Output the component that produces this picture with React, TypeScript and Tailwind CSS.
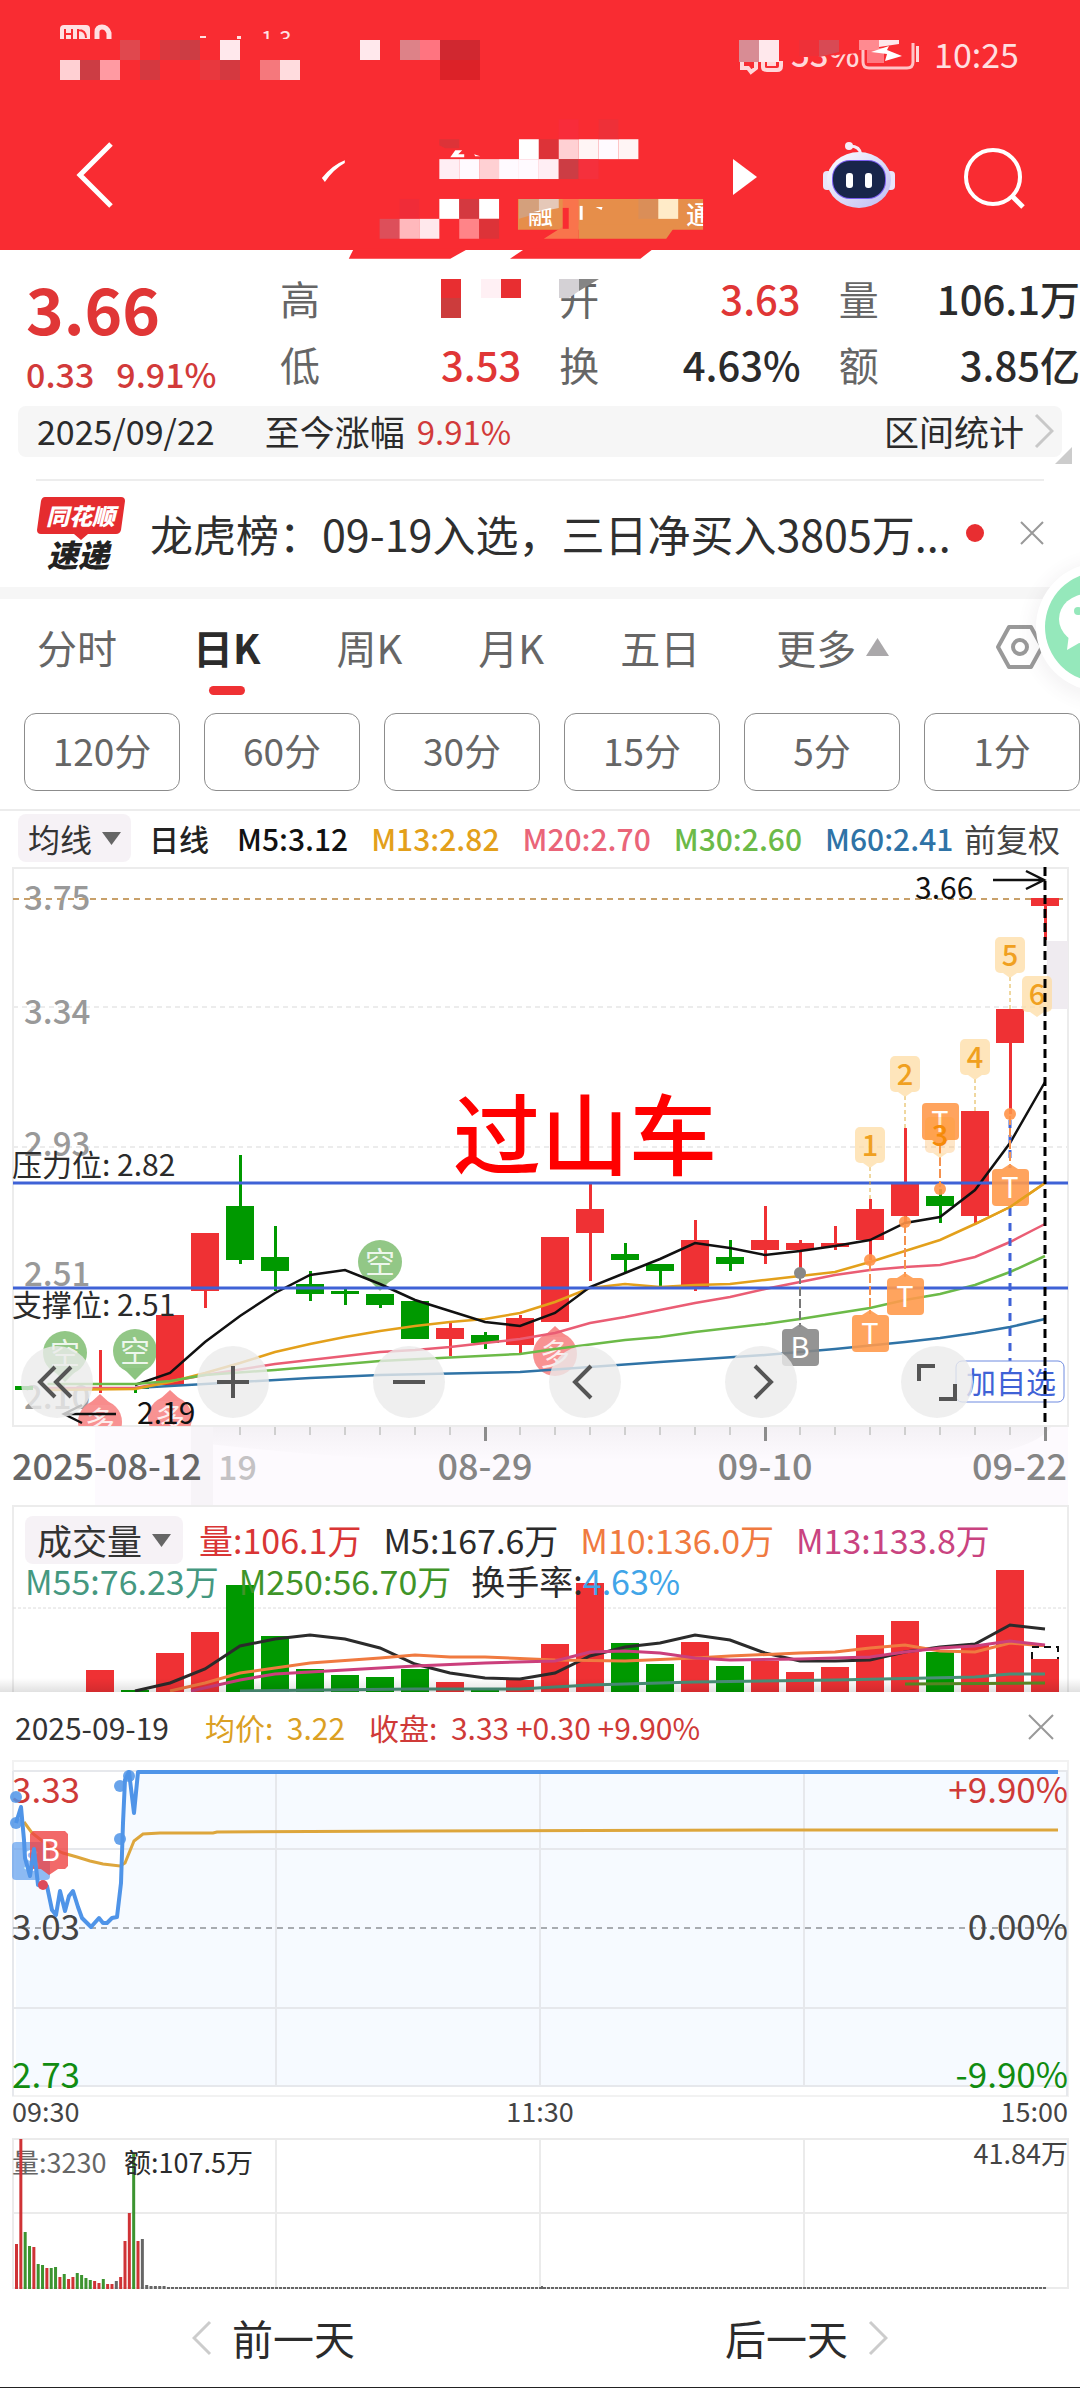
import React from "react";

type Candle = [k: number, open: number, close: number, high: number, low: number, up: boolean];
type Pt = [number, number];

const RED = "#ef3134";
const GREEN = "#009900";

const kx = (k: number) => 1045 - 35 * k;
const line = (pts: Pt[]) => pts.map(([k, y]) => `${kx(k)},${y}`).join(" ");
const raw = (pts: Pt[]) => pts.map(([x, y]) => `${x},${y}`).join(" ");

const candles: Candle[] = [
  [27, 1388, 1390, 1350, 1393, true],
  [26, 1387, 1389, 1387, 1393, false],
  [25, 1315, 1385, 1315, 1385, true],
  [24, 1233, 1291, 1233, 1308, true],
  [23, 1206, 1260, 1155, 1264, false],
  [22, 1257, 1271, 1226, 1291, false],
  [21, 1284, 1294, 1271, 1301, false],
  [20, 1291, 1294, 1289, 1305, false],
  [19, 1294, 1305, 1294, 1308, false],
  [18, 1301, 1339, 1301, 1339, false],
  [17, 1328, 1339, 1323, 1356, true],
  [16, 1335, 1343, 1332, 1349, false],
  [15, 1318, 1345, 1315, 1355, true],
  [14, 1237, 1322, 1237, 1322, true],
  [13, 1209, 1233, 1183, 1281, true],
  [12, 1254, 1260, 1243, 1273, false],
  [11, 1264, 1271, 1264, 1286, false],
  [10, 1240, 1288, 1220, 1291, true],
  [9, 1257, 1264, 1240, 1271, false],
  [8, 1240, 1250, 1206, 1264, true],
  [7, 1243, 1250, 1240, 1273, true],
  [6, 1243, 1247, 1226, 1250, true],
  [5, 1209, 1240, 1199, 1260, true],
  [4, 1183, 1216, 1128, 1223, true],
  [3, 1196, 1206, 1189, 1223, false],
  [2, 1111, 1216, 1111, 1223, true],
  [1, 1009, 1043, 1009, 1114, true],
  [0, 898, 906, 898, 940, true],
];

const priceLines: { color: string; pts: Pt[] }[] = [
  { color: "#2f73a6", pts: [[28.5, 1389], [26, 1388], [24, 1384], [21, 1378], [19, 1375], [15, 1372], [13, 1367], [11, 1362], [8, 1355], [6, 1349], [4, 1342], [3, 1338], [2, 1333], [1, 1327], [0, 1319]] },
  { color: "#ea5d74", pts: [[28.5, 1388], [26, 1388], [24, 1375], [22, 1364], [19, 1352], [18, 1350], [17, 1347], [16, 1343], [15, 1339], [14, 1333], [13, 1323], [12, 1317], [11, 1310], [10, 1303], [9, 1297], [8, 1289], [7, 1282], [6, 1275], [5, 1270], [4, 1267], [3, 1265], [2, 1257], [1, 1242], [0, 1224]] },
  { color: "#e3a01b", pts: [[28.5, 1390], [26, 1389], [25, 1382], [24, 1373], [23, 1363], [22, 1352], [21, 1344], [20, 1337], [19, 1331], [18, 1326], [17, 1322], [16, 1319], [15, 1313], [14, 1302], [13, 1288], [12, 1284], [11, 1287], [10, 1285], [9, 1284], [8, 1280], [7, 1276], [6, 1272], [5, 1262], [4, 1251], [3, 1240], [2, 1224], [1, 1207], [0, 1183]] },
  { color: "#111111", pts: [[26, 1385], [25, 1373], [24, 1342], [23, 1316], [22, 1293], [21, 1275], [20, 1270], [19, 1284], [18, 1300], [17, 1311], [16, 1322], [15, 1326], [14, 1313], [13, 1287], [12, 1273], [11, 1259], [10, 1243], [9, 1248], [8, 1255], [7, 1251], [6, 1246], [5, 1240], [4, 1223], [3, 1217], [2, 1190], [1, 1143], [0, 1082]] },
  { color: "#6cba48", pts: [[28.5, 1384], [26, 1384], [25, 1381], [24, 1375], [22, 1370], [19, 1361], [15, 1354], [14, 1349], [12, 1340], [11, 1337], [10, 1332], [8, 1324], [7, 1319], [5, 1308], [4, 1300], [3, 1294], [2, 1285], [1, 1272], [0, 1256]] },
];

const volumes: [number, number, boolean][] = [
  [27, 1670, true], [26, 1690, false], [25, 1653, true], [24, 1632, true], [23, 1585, false], [22, 1636, false],
  [21, 1669, false], [20, 1675, false], [19, 1677, false], [18, 1669, false], [17, 1682, true], [16, 1690, false],
  [15, 1680, true], [14, 1644, true], [13, 1583, true], [12, 1643, false], [11, 1664, false], [10, 1642, true],
  [9, 1666, false], [8, 1661, true], [7, 1672, true], [6, 1667, true], [5, 1635, true], [4, 1621, true],
  [3, 1652, false], [2, 1645, true], [1, 1570, true], [0, 1659, true],
];

const volumeLines: { color: string; pts: Pt[] }[] = [
  { color: "#2b2b2b", pts: [[26, 1691], [25, 1683], [24, 1669], [23, 1646], [22, 1639], [21, 1635], [20, 1639], [19, 1648], [18, 1664], [17, 1673], [16, 1678], [15, 1679], [14, 1673], [13, 1656], [12, 1647], [11, 1643], [10, 1635], [9, 1640], [8, 1653], [7, 1661], [6, 1661], [5, 1660], [4, 1652], [3, 1647], [2, 1644], [1, 1625], [0, 1629]] },
  { color: "#f07a40", pts: [[25, 1691], [24, 1683], [23, 1673], [21, 1663], [19, 1658], [18, 1655], [17, 1657], [16, 1657], [14, 1660], [12, 1661], [10, 1658], [9, 1656], [7, 1653], [6, 1652], [5, 1648], [4, 1645], [3, 1651], [2, 1652], [1, 1643], [0, 1646]] },
  { color: "#cb3f7c", pts: [[24.4, 1691], [23, 1680], [22, 1674], [20, 1670], [18, 1666], [16, 1663], [14, 1661], [13, 1652], [12, 1651], [11, 1653], [10, 1658], [9, 1660], [7, 1659], [5, 1657], [4, 1652], [3, 1648], [2, 1646], [1, 1641], [0, 1645]] },
  { color: "#4a8f78", pts: [[23, 1691], [18, 1689], [15, 1689], [13, 1685], [10, 1682], [6, 1680], [2, 1677], [1, 1674], [0, 1674]] },
  { color: "#5a8a25", pts: [[4, 1684], [0, 1683]] },
];

const intraday: Pt[] = [
  [16, 1823], [21, 1807], [24, 1840], [25, 1858], [30, 1876], [34, 1849], [38, 1885], [43, 1887], [47, 1886], [52, 1910],
  [56, 1915], [60, 1891], [65, 1911], [69, 1896], [73, 1891], [78, 1907], [82, 1918], [91, 1927], [99, 1918], [103, 1923],
  [107, 1923], [112, 1918], [117, 1917], [121, 1883], [123, 1823], [125, 1780], [129, 1772], [134, 1813], [138, 1772], [1058, 1772],
];
const average: Pt[] = [
  [24, 1822], [32, 1833], [50, 1847], [63, 1853], [77, 1857], [90, 1861], [103, 1864], [120, 1866], [125, 1863], [134, 1841],
  [143, 1834], [160, 1833], [213, 1833], [217, 1832], [423, 1831], [809, 1830], [1058, 1830],
];

const minuteBars: [string, number][] = [
  ["r", 45], ["r", 150], ["g", 57], ["g", 43], ["r", 42], ["g", 25], ["g", 24], ["r", 21], ["g", 21], ["g", 22], ["r", 12],
  ["g", 15], ["r", 10], ["r", 12], ["g", 16], ["g", 14], ["g", 11], ["g", 9], ["r", 8], ["r", 6], ["g", 10], ["r", 5], ["r", 5],
  ["k", 8], ["r", 12], ["r", 48], ["r", 76], ["g", 135], ["r", 48], ["k", 50], ["k", 4], ["k", 3], ["k", 3], ["k", 3], ["k", 3],
];
const barColor: Record<string, string> = { r: "#cf3336", g: "#3c9430", k: "#666666" };

const headerCells: [number, number, string][] = [
  [220, 29, "#ffffff"], [240, 29, "#dd3338"], [260, 29, "#ffd0d3"], [280, 29, "#fff5f5"], [300, 29, "#fffaff"], [320, 29, "#fff5f5"],
  [260, 9, "#f82c3a"], [300, 9, "#ee3038"],
  [140, 49, "#ffeef4"], [160, 49, "#fffaff"], [180, 49, "#ffd0d3"], [200, 49, "#fffaff"], [220, 49, "#fffaff"], [240, 49, "#ffeef4"],
  [260, 49, "#cc3d44"], [280, 49, "#f5303c"], [100, 89, "#f02c38"], [140, 89, "#ffffff"], [160, 89, "#d43940"], [180, 89, "#ffffff"],
  [80, 109, "#dd4f5a"], [100, 109, "#ffb8bc"], [120, 109, "#ffe8ec"], [160, 109, "#ff8488"], [180, 109, "#dd3338"],
];

const statusCells: [number, number, string][] = [
  [120, 40, "#e0484e"], [160, 40, "#d8393f"], [180, 40, "#cc3d44"], [220, 40, "#ffe8ec"], [360, 40, "#ffe8ec"], [400, 40, "#dd8288"],
  [420, 40, "#ff7480"], [440, 40, "#d02830"], [460, 40, "#d02830"], [60, 60, "#ffd0d3"], [80, 60, "#cc3d44"], [100, 60, "#ff9aa2"],
  [140, 60, "#d43940"], [200, 60, "#e8383e"], [220, 60, "#d43940"], [260, 60, "#f5787c"], [280, 60, "#ffdcde"], [440, 60, "#dc2228"], [460, 60, "#dc2228"],
];

function StatusBar() {
  return (
    <div className="flex h-[105px] items-start justify-between pr-[61px]">
      <svg className="h-[90px] w-[480px]" viewBox="0 0 480 90" aria-hidden="true">
        <defs>
          <clipPath id="left-mask"><rect x="0" y="20" width="480" height="19" /></clipPath>
        </defs>
        <g clipPath="url(#left-mask)" fill="#ffe0e2">
          <rect x="60" y="25" width="30" height="24" rx="4" />
          <path d="M65 29v12M65 34h7M72 29v12M78 29v12M78 30q8 0 8 8" stroke="#f92c32" strokeWidth="2" fill="none" />
          <path d="M97 42V32q0-5 5-5t7 6v9" stroke="#ffe0e2" strokeWidth="5" fill="none" />
          <text x="261" y="47" fontSize="22">1.3</text>
          <rect x="200" y="36" width="6" height="2" />
          <rect x="237" y="36" width="4" height="3" />
        </g>
        {statusCells.map(([x, y, c]) => (
          <rect key={`${x}-${y}`} x={x} y={y} width="20" height="20" fill={c} />
        ))}
      </svg>
      <div className="flex items-start gap-[15px]">
        <svg className="h-[90px] w-[185px]" viewBox="735 0 185 90" aria-hidden="true">
          <defs>
            <clipPath id="right-mask"><path d="M735 57h80l45-4v-6h60v45H735z" /></clipPath>
          </defs>
          <g clipPath="url(#right-mask)">
            <text x="792" y="67" fontSize="33" fontWeight="500" fill="#ffd8da">53%</text>
          </g>
          <path d="M743 60v8h6l3 4 5-4v-6M764 62v5q0 3 4 3h10q4 0 4-4v-5M768 64h9" fill="none" stroke="#ffd8da" strokeWidth="4" />
          <rect x="740" y="40" width="20" height="22" fill="#d88c94" />
          <rect x="760" y="40" width="20" height="22" fill="#ffe8ec" />
          <rect x="800" y="40" width="20" height="16" fill="#ee3038" />
          <path d="M820 40h20v12l-20 5z" fill="#d84a54" />
          <path d="M864 46v16q0 6 6 6h38q6 0 6-6V43" fill="none" stroke="#ffc4c7" strokeWidth="3" />
          <rect x="868" y="48" width="17" height="15" fill="#ff7880" />
          <rect x="860" y="40" width="20" height="10" fill="#ff8a90" />
          <path d="M880 40h20v4l-20 3z" fill="#ffe8ec" />
          <path d="M872 52l18-6-2 4 15 6-17 5 2-7z" fill="#fff" />
          <rect x="917" y="46" width="3" height="16" fill="#ffd8da" />
        </svg>
        <span className="pt-[36px] text-[34px] leading-9 text-[#ffdfe0]">10:25</span>
      </div>
    </div>
  );
}

function TitleBar() {
  return (
    <div className="flex h-[145px] items-start justify-between pr-[54px] pl-[74px]">
      <button aria-label="返回" className="mt-[36px]">
        <svg className="h-[68px] w-[42px]" viewBox="0 0 42 68" fill="none" stroke="#fff" strokeWidth="5">
          <path d="M37 3L6 34l31 31" />
        </svg>
      </button>
      <svg className="relative z-10 mt-[5px] ml-[184px] h-[155px] w-[420px]" viewBox="0 0 420 155" aria-hidden="true">
        <path d="M54 139h115l-18 10H49zM226 139h129l-13 10H211z" fill="#f92c32" />
        <path d="M22 68Q32 55 45 50v3Q34 59 25 72z" fill="#fff" />
        <path d="M140 29h20v9h-14l-6-3z" fill="#dd3338" />
        <path d="M151 47l5-7h7l-4 4h6v3zM175 44l6 2h-5z" fill="#fff" />
        <path d="M219 89h186v31H219z" fill="#e68e4a" />
        <path d="M264 89h16v40h-35l19-12z" fill="#f9744c" />
        <path d="M280 115h98l-10 14h-88z" fill="#e68e4a" />
        <path d="M220 89h20v14l-20 6z" fill="#d4a07c" />
        <path d="M240 89h20v9l-20 4z" fill="#e5c8b8" />
        <rect x="264" y="98" width="6" height="21" fill="#f92c32" />
        <rect x="340" y="89" width="20" height="20" fill="#da8e58" />
        <rect x="360" y="89" width="20" height="20" fill="#ffebc8" />
        <rect x="281" y="96" width="3" height="14" fill="#fff" />
        <path d="M297 97h7l-1 3z" fill="#fff" />
        <defs>
          <clipPath id="tag-mask"><rect x="219" y="89" width="186" height="31" /></clipPath>
          <clipPath id="tag-mask-low"><path d="M219 106l41-10v30h-41z" /></clipPath>
        </defs>
        <text x="229" y="114" fontSize="25" fontWeight="500" fill="#fff" clipPath="url(#tag-mask-low)">融</text>
        <text x="388" y="114" fontSize="25" fontWeight="500" fill="#fff" clipPath="url(#tag-mask)">通</text>
        {headerCells.map(([x, y, c]) => (
          <rect key={`${x}-${y}`} x={x} y={y} width="20" height="20" fill={c} />
        ))}
      </svg>
      <button aria-label="下一只" className="mt-[54px] ml-[15px]">
        <svg className="h-[36px] w-[24px]" viewBox="0 0 24 36"><path d="M0 0l24 18L0 36z" fill="#fff" /></svg>
      </button>
      <button aria-label="智能助手" className="mt-[35px] ml-[66px]">
        <svg className="h-[70px] w-[72px]" viewBox="0 0 72 70">
          <defs>
            <linearGradient id="robot" x1="0" y1="0" x2="1" y2="1">
              <stop offset="0" stopColor="#fff" /><stop offset="1" stopColor="#bdbbf2" />
            </linearGradient>
          </defs>
          <circle cx="26" cy="6" r="4" fill="#f6eef8" />
          <path d="M27 6q10 0 11 9" fill="none" stroke="#f6eef8" strokeWidth="3" />
          <rect x="0" y="31" width="9" height="19" rx="4" fill="#e9e6fb" />
          <rect x="63" y="31" width="9" height="19" rx="4" fill="#e9e6fb" />
          <ellipse cx="36" cy="40" rx="32" ry="28" fill="url(#robot)" />
          <rect x="9" y="20" width="54" height="39" rx="18" fill="#7a5cf0" />
          <rect x="10" y="21" width="52" height="37" rx="17" fill="#18254a" />
          <rect x="23" y="33" width="7" height="15" rx="3" fill="#fff" />
          <rect x="42" y="33" width="7" height="15" rx="3" fill="#fff" />
        </svg>
      </button>
      <button aria-label="搜索" className="mt-[42px] ml-[69px]">
        <svg className="h-[62px] w-[62px]" viewBox="0 0 62 62" fill="none" stroke="#fff" strokeWidth="4">
          <circle cx="29" cy="30" r="27" /><path d="M48 49l11 11" strokeWidth="5" />
        </svg>
      </button>
    </div>
  );
}

function Stats() {
  const red = "text-[#e03636]";
  const dark = "text-[#2b2b2b]";
  const cols: [string, string, string, string, string, string][] = [
    ["高", "", red, "低", "3.53", red],
    ["开", "3.63", red, "换", "4.63%", dark],
    ["量", "106.1万", dark, "额", "3.85亿", dark],
  ];
  return (
    <section className="flex h-[156px] pt-[15px] pl-[26px]">
      <div className="w-[254px] text-[#e03636]">
        <div className="pt-[6px] text-[64px] leading-[72px] font-bold">3.66</div>
        <div className="mt-[9px] flex gap-[22px] text-[34px] leading-[44px] font-medium text-[#d23a3a]"><span>0.33</span><span>9.91%</span></div>
      </div>
      <div className="flex flex-1 gap-[38px]">
        {cols.map(([a, av, ac, b, bv, bc], i) => (
          <dl key={a} className="relative flex flex-1 flex-col text-[40px] leading-[66px]">
            <div className="flex justify-between whitespace-nowrap"><dt className="text-[#666]">{a}</dt><dd className={`font-medium ${ac}`}>{av}</dd></div>
            <div className="flex justify-between whitespace-nowrap"><dt className="text-[#666]">{b}</dt><dd className={`font-medium ${bc}`}>{bv}</dd></div>
            {i === 0 && (
              <svg className="absolute top-[14px] right-0 h-[39px] w-[80px]" viewBox="0 0 80 39" aria-hidden="true">
                <path d="M0 0h20v19H0zM60 0h20v19H60z" fill="#e82e31" />
                <path d="M0 19h20v20H0z" fill="#cc3c3c" />
                <path d="M40 0h20v19H40z" fill="#fff0f4" />
              </svg>
            )}
            {i === 1 && (
              <svg className="absolute top-[14px] left-0 h-[19px] w-[40px]" viewBox="0 0 40 19" aria-hidden="true">
                <path d="M0 0h20v12L10 19H0z" fill="#d4d1d5" />
                <path d="M20 0h20L20 12z" fill="#858585" />
              </svg>
            )}
          </dl>
        ))}
      </div>
    </section>
  );
}

function DateBar() {
  return (
    <section className="relative mx-[18px] flex h-[51px] items-center rounded-lg bg-[#f6f6f6] pr-[8px] pb-[2px] pl-[19px] text-[35px] leading-[48px] text-[#2b2b2b]">
      <span className="text-[34px]">2025/09/22</span>
      <span className="ml-[50px]">至今涨幅</span>
      <span className="ml-3 text-[33px] text-[#d23a3a]">9.91%</span>
      <button className="ml-auto flex items-center gap-[10px]">
        区间统计
        <svg className="h-[36px] w-[20px]" viewBox="0 0 20 36" fill="none" stroke="#c8c8c8" strokeWidth="3"><path d="M2 2l16 16L2 34" /></svg>
      </button>
      <svg className="absolute -right-[10px] -bottom-[7px] h-[17px] w-[17px]" viewBox="0 0 17 17"><path d="M17 0v17H0z" fill="#ccc" /></svg>
    </section>
  );
}

function NewsRow() {
  return (
    <section className="mt-[22px] border-b-[12px] border-[#f6f6f6]">
      <div className="mx-[36px] flex h-[108px] items-center border-t-2 border-[#ededed] pb-[2px]">
        <svg className="h-[76px] w-[90px] shrink-0" viewBox="36 495 90 76" role="img" aria-label="同花顺速递">
          <path d="M45 497h76q4 0 4 4l-4 29q-1 4-5 4H88l-7 6-7-6H41q-4 0-4-4l4-29q1-4 4-4z" fill="#e52c2f" />
          <text x="46" y="525" fontSize="23" fontWeight="900" fontStyle="italic" fill="#fff">同花顺</text>
          <text x="47" y="567" fontSize="31" fontWeight="900" fontStyle="italic" fill="#222">速递</text>
        </svg>
        <a href="#news" className="ml-[24px] min-w-0 flex-1 truncate text-[43px] leading-[60px] text-[#2f2f2f]">龙虎榜：09-19入选，三日净买入3805万...</a>
        <span className="ml-[12px] h-[18px] w-[18px] rounded-full bg-[#e82e31]" />
        <button aria-label="关闭" className="ml-[36px]">
          <svg className="h-[24px] w-[24px]" viewBox="0 0 24 24" stroke="#999" strokeWidth="2"><path d="M1 1l22 22M23 1L1 23" /></svg>
        </button>
      </div>
    </section>
  );
}

function PeriodTabs() {
  const tabs = ["分时", "日K", "周K", "月K", "五日", "更多"];
  const minutes = ["120分", "60分", "30分", "15分", "5分", "1分"];
  return (
    <section className="border-b-2 border-[#ececec] pb-[18px]">
      <nav className="flex h-[114px] items-start gap-[76px] pt-[18px] pl-[37px] text-[40px] leading-[60px] text-[#666]">
        {tabs.map((t) => (
          <button
            key={t}
            className={
              t === "日K"
                ? "flex flex-col items-center font-bold text-[#2b2b2b] after:mt-[9px] after:h-[9px] after:w-[36px] after:rounded-full after:bg-[#ef3134]"
                : "flex items-center"
            }
          >
            {t}
            {t === "更多" && (
              <svg className="-mr-[33px] ml-[10px] h-[18px] w-[23px]" viewBox="0 0 23 18"><path d="M11.5 0L23 18H0z" fill="#aaa8aa" /></svg>
            )}
          </button>
        ))}
        <button aria-label="设置" className="mt-[6px] mr-[35px] ml-auto">
          <svg className="h-[48px] w-[50px]" viewBox="0 0 50 48" fill="none" stroke="#999" strokeWidth="4">
            <path d="M14 4h22l11 20-11 20H14L3 24z" strokeLinejoin="round" /><circle cx="25" cy="24" r="7" />
          </svg>
        </button>
      </nav>
      <div className="grid grid-cols-6 gap-[24px] pl-[24px]">
        {minutes.map((m) => (
          <button key={m} className="h-[78px] rounded-xl border border-[#8c8c8c] pb-[3px] text-[37px] text-[#666]">{m}</button>
        ))}
      </div>
    </section>
  );
}

function Caret() {
  return <svg className="h-[13px] w-[19px]" viewBox="0 0 19 13" aria-hidden="true"><path d="M0 0h19L9.5 13z" fill="#666" /></svg>;
}

function AverageRow() {
  return (
    <div className="flex h-[54px] items-center pr-[20px] pl-[18px] text-[30px] leading-[44px] font-medium whitespace-nowrap">
      <button className="flex h-[48px] items-center gap-[10px] rounded-lg bg-[#f6f2f6] px-[10px] text-[32px] font-normal text-[#333]">均线<Caret /></button>
      <span className="ml-[18px] text-[#222]">日线</span>
      <span className="ml-[28px] text-[#111]">M5:3.12</span>
      <span className="ml-[23px] text-[#e3a01b]">M13:2.82</span>
      <span className="ml-[23px] text-[#ea6579]">M20:2.70</span>
      <span className="ml-[23px] text-[#6cba48]">M30:2.60</span>
      <span className="ml-[23px] text-[#2f73a6]">M60:2.41</span>
      <button className="ml-auto text-[32px] font-normal text-[#444]">前复权</button>
    </div>
  );
}

function Tag({ x, y, label, color, tail = "up" }: { x: number; y: number; label: string; color: string; tail?: "up" | "down" }) {
  const points = tail === "up" ? `${x - 8},${y} ${x},${y - 5} ${x + 8},${y}` : `${x - 8},${y + 37} ${x},${y + 42} ${x + 8},${y + 37}`;
  return (
    <g>
      <rect x={x - 18} y={y} width="37" height="37" rx="4" fill={color} fillOpacity="0.9" />
      <polygon points={points} fill={color} fillOpacity="0.9" />
      <text x={x} y={y + 29} fontSize="29" fill="#fff" textAnchor="middle">{label}</text>
    </g>
  );
}

function DayBadge({ x, y, label, stem = 0, faint = false }: { x: number; y: number; label: string; stem?: number; faint?: boolean }) {
  const alpha = faint ? 0.25 : 0.75;
  return (
    <g>
      {stem > 0 && <path d={`M${x} ${y + 40}v${stem}`} stroke="#e0b040" strokeWidth="1" strokeDasharray="4 3" />}
      <rect x={x - 15} y={y} width="30" height="36" rx="5" fill={faint ? "#ff9a20" : "#fddca4"} fillOpacity={alpha} />
      <polygon points={`${x - 7},${y + 36} ${x},${y + 41} ${x + 7},${y + 36}`} fill="#fddca4" fillOpacity="0.75" />
      <text x={x} y={y + 29} fontSize="29" fontWeight="500" fill={faint ? "#f58a08" : "#f0a020"} textAnchor="middle">{label}</text>
    </g>
  );
}

function Pin({ x, y, label, down }: { x: number; y: number; label: string; down: boolean }) {
  const c = down ? "#8cc480" : "#f88c8c";
  return (
    <g>
      <circle cx={x} cy={y} r="22" fill={c} fillOpacity="0.95" />
      <polygon points={down ? `${x - 12},${y + 17} ${x},${y + 29} ${x + 12},${y + 17}` : `${x - 12},${y - 17} ${x},${y - 28} ${x + 12},${y - 17}`} fill={c} />
      <text x={x} y={y + 11} fontSize="30" fill="#fff" fillOpacity="0.85" textAnchor="middle">{label}</text>
    </g>
  );
}

function PriceChart() {
  const labels: [string, number][] = [["3.75", 910], ["3.34", 1024], ["2.93", 1156], ["2.51", 1286], ["2.10", 1409]];
  const tools: [string, React.ReactNode][] = [
    ["最早", <path key="a" d="M34 21L19 36l15 15M50 21L35 36l15 15" />],
    ["放大", <path key="b" d="M20 36h32M36 20v32" />],
    ["缩小", <path key="c" d="M20 36h32" />],
    ["左移", <path key="d" d="M42 20L26 36l16 16" />],
    ["右移", <path key="e" d="M30 20l16 16-16 16" />],
    ["全屏", <path key="f" d="M18 35V20h16M54 38v15H38" />],
  ];
  return (
    <section className="relative">
      <svg className="block w-full" viewBox="0 865 1080 640" role="img" aria-label="日K线图">
        <defs>
          <clipPath id="plot"><rect x="13" y="866" width="1055" height="560" /></clipPath>
          <linearGradient id="axis-shade" x1="0" y1="0" x2="0" y2="1">
            <stop offset="0" stopColor="#f4f1f5" /><stop offset="1" stopColor="#fdfafe" />
          </linearGradient>
        </defs>
        <rect x="95" y="1427" width="973" height="78" fill="#fdfafe" />
        <path d="M191 1427h860q-20 28-120 33H420q-90-2-229-18z" fill="url(#axis-shade)" />
        <rect x="191" y="1427" width="22" height="78" fill="#f7f4f8" />
        <rect x="13" y="868" width="1055" height="558" fill="none" stroke="#ececec" strokeWidth="2" />
        <path d="M13 1007h1055M13 1147h1055" stroke="#ececec" strokeWidth="2" strokeDasharray="5 4" />
        {labels.map(([t, y]) => (
          <text key={t} x="24" y={y} fontSize="33" fontWeight="500" fill="#999">{t}</text>
        ))}
        <path d="M13 899h1050" stroke="#c8a06a" strokeWidth="2" strokeDasharray="6 5" />
        <rect x="1047" y="941" width="21" height="68" fill="#efebf0" />
        <g clipPath="url(#plot)">
          <rect x="15" y="1386" width="18" height="4" fill={GREEN} />
          <Pin x={65} y={1353} label="空" down />
          <Pin x={135} y={1351} label="空" down />
          <Pin x={380} y={1262} label="空" down />
          <Pin x={100} y={1422} label="多" down={false} />
          <Pin x={170} y={1418} label="多" down={false} />
          <Pin x={555} y={1354} label="多" down={false} />
          {candles.map(([k, a, b, h, l, up]) => (
            <g key={k} fill={up ? RED : GREEN}>
              <rect x={kx(k) - 14} y={a} width="28" height={b - a} />
              <rect x={kx(k) - 1} y={h} width="3" height={l - h} />
            </g>
          ))}
          {priceLines.map((l) => (
            <polyline key={l.color} points={line(l.pts)} fill="none" stroke={l.color} strokeWidth="2.5" />
          ))}
        </g>
        <path d="M13 1183h1055M13 1288h1055" stroke="#3f62d6" strokeWidth="3" />
        <text x="12" y="1176" fontSize="30" fill="#2b2b2b">压力位: 2.82</text>
        <text x="12" y="1316" fontSize="30" fill="#2b2b2b">支撑位: 2.51</text>
        <text x="585" y="1168" fontSize="88" fontWeight="500" fill="#ff0000" textAnchor="middle">过山车</text>

        <path d="M1010 1120v48M1010 1208v156" stroke="#3f62d6" strokeWidth="3" strokeDasharray="8 7" />
        <path d="M870 1262v52M905 1224v53M940 1145v42M1010 1116v50" stroke="#f4914e" strokeWidth="2" strokeDasharray="9 3" />
        <path d="M800 1275v52" stroke="#777" strokeWidth="2" strokeDasharray="9 3" />
        {([[870, 1260], [905, 1222], [940, 1189], [1010, 1114]] as Pt[]).map(([x, y]) => (
          <circle key={x} cx={x} cy={y} r="6" fill="#ff9448" fillOpacity="0.9" />
        ))}
        <circle cx="800" cy="1273" r="6" fill="#888" />
        <DayBadge x={870} y={1127} label="1" stem={32} />
        <DayBadge x={905} y={1056} label="2" stem={32} />
        <Tag x={940} y={1103} label="T" color="#ff9a4d" tail="down" />
        <DayBadge x={940} y={1117} label="3" faint />
        <DayBadge x={975} y={1039} label="4" stem={32} />
        <DayBadge x={1010} y={937} label="5" stem={32} />
        <DayBadge x={1037} y={976} label="6" />
        <Tag x={870} y={1315} label="T" color="#ff9a4d" />
        <Tag x={905} y={1278} label="T" color="#ff9a4d" />
        <Tag x={1010} y={1169} label="T" color="#ff9a4d" />
        <Tag x={800} y={1329} label="B" color="#888888" />
        <polyline points="975,1224 1010,1207 1045,1183" fill="none" stroke="#e3a01b" strokeWidth="2.5" />

        <text x="915" y="899" fontSize="30" fill="#111">3.66</text>
        <path d="M993 880h50M1026 871l18 9-18 9" fill="none" stroke="#111" strokeWidth="2.5" />
        <text x="137" y="1424" fontSize="30" fill="#111">2.19</text>
        <path d="M116 1414H66M82 1423l-18-9 18-9" fill="none" stroke="#111" strokeWidth="2.5" />

        <rect x="956" y="1361" width="108" height="41" rx="6" fill="#fff" stroke="#6f8be0" strokeWidth="1" />
        <text x="966" y="1393" fontSize="30" fill="#3f62d6">加自选</text>
        <path d="M1045 867v558" stroke="#000" strokeWidth="3" strokeDasharray="9 5" />

        {Array.from({ length: 24 }, (_, k) => (
          <rect key={k} x={kx(k) - 1} y="1427" width={k % 8 === 0 ? 3 : 2} height={k % 8 === 0 ? 14 : 8} fill={k % 8 === 0 ? "#8c8c8c" : "#cfcfcf"} />
        ))}
        <g fontSize="36" fontWeight="500" fill="#858585">
          <text x="12" y="1480" fill="#666">2025-08-12</text>
          <text x="218" y="1480" fontSize="34" fill="#c4c2c4">19</text>
          <text x="485" y="1480" textAnchor="middle">08-29</text>
          <text x="765" y="1480" textAnchor="middle">09-10</text>
          <text x="1067" y="1480" textAnchor="end">09-22</text>
        </g>
      </svg>
      <div className="absolute inset-x-0 top-[481px] flex justify-start gap-[104px] pl-[21px]">
        {tools.map(([name, icon]) => (
          <button key={name} aria-label={name} className="h-[72px] w-[72px] shrink-0 rounded-full bg-[#ebebeb]/80">
            <svg viewBox="0 0 72 72" fill="none" stroke="#555" strokeWidth="4">{icon}</svg>
          </button>
        ))}
      </div>
    </section>
  );
}

function VolumeChart() {
  return (
    <section className="relative">
      <svg className="block w-full" viewBox="0 1505 1080 187" role="img" aria-label="成交量图">
        <defs>
          <linearGradient id="sheet-shadow" x1="0" y1="0" x2="0" y2="1">
            <stop offset="0" stopColor="#000" stopOpacity="0" /><stop offset="1" stopColor="#000" stopOpacity="0.12" />
          </linearGradient>
        </defs>
        <path d="M13 1692V1506h1055v186" fill="none" stroke="#ececec" strokeWidth="2" />
        <path d="M13 1608h1055" stroke="#dcdcdc" strokeWidth="1" strokeDasharray="3 2" />
        {volumes.map(([k, y, up]) => (
          <rect key={k} x={kx(k) - 14} y={y} width="28" height={1692 - y} fill={up ? RED : GREEN} />
        ))}
        {volumeLines.map((l) => (
          <polyline key={l.color} points={line(l.pts)} fill="none" stroke={l.color} strokeWidth="3" />
        ))}
        <path d="M1032 1659v-12h26v12" fill="#fff" stroke="#111" strokeWidth="2" strokeDasharray="7 5" />
        <rect x="0" y="1678" width="1080" height="14" fill="url(#sheet-shadow)" />
      </svg>
      <div className="absolute top-[11px] left-[25px] text-[34px] leading-[34px] whitespace-nowrap">
        <div className="flex items-center gap-[22px]">
          <button className="-mr-[6px] flex h-[48px] items-center gap-[10px] rounded-lg bg-[#f6f2f6] px-[12px] text-[35px] text-[#333]">成交量<Caret /></button>
          <span className="text-[#d93535]">量:106.1万</span>
          <span className="text-[#2b2b2b]">M5:167.6万</span>
          <span className="text-[#f07a40]">M10:136.0万</span>
          <span className="text-[#c94380]">M13:133.8万</span>
        </div>
        <div className="flex gap-[20px]">
          <span className="text-[#459880]">M55:76.23万</span>
          <span className="text-[#3f9428]">M250:56.70万</span>
          <span className="text-[#2b2b2b]">换手率:<b className="font-normal text-[#41a5e8]">4.63%</b></span>
        </div>
      </div>
    </section>
  );
}

function DayDetail() {
  return (
    <section className="bg-white">
      <div className="flex h-[63px] items-center pt-[6px] pr-[26px] pl-[15px] text-[30px] leading-10 whitespace-pre">
        <span className="text-[#333]">2025-09-19</span>
        <span className="ml-[36px] text-[#dba023]">均价:  3.22</span>
        <span className="ml-[24px] text-[#cf3a38]">收盘:  3.33 +0.30 +9.90%</span>
        <button aria-label="关闭" className="ml-auto">
          <svg className="h-[26px] w-[26px]" viewBox="0 0 26 26" stroke="#999" strokeWidth="2"><path d="M1 1l24 24M25 1L1 25" /></svg>
        </button>
      </div>
      <svg className="block w-full" viewBox="0 1755 1080 375" role="img" aria-label="分时图">
        <rect x="13" y="1761" width="1055" height="335" fill="none" stroke="#f2f2f2" strokeWidth="2" />
        <polygon points={`16,2086 ${raw(intraday)} 1067,1772 1067,2086`} fill="#f6faff" />
        <path d="M13 1771h1055M13 1849h1055M13 2008h1055M13 2086h1055M13 1771v325M1067 1771v325M276 1771v315M540 1771v315M804 1771v315" stroke="#e6e8ec" strokeWidth="2" />
        <path d="M13 1928h1055" stroke="#a8acb0" strokeWidth="2" strokeDasharray="6 5" />
        <g fontSize="35">
          <text x="12" y="1803" fill="#cf3a38">3.33</text>
          <text x="12" y="1940" fill="#444">3.03</text>
          <text x="12" y="2088" fill="#118c11">2.73</text>
          <g textAnchor="end">
            <text x="1068" y="1803" fill="#cf3a38">+9.90%</text>
            <text x="1068" y="1940" fill="#444">0.00%</text>
            <text x="1068" y="2088" fill="#118c11">-9.90%</text>
          </g>
        </g>
        <rect x="12" y="1842" width="38" height="38" rx="4" fill="#5f9eee" fillOpacity="0.7" />
        <text x="31" y="1871" fontSize="28" fill="#fff" textAnchor="middle">S</text>
        <polyline points={raw(average)} fill="none" stroke="#dda63c" strokeWidth="3" />
        <polygon points="33,1831 65,1831 68,1834 68,1866 65,1869 58,1869 49,1875 41,1869 33,1869 30,1866 30,1834" fill="#ef4444" fillOpacity="0.8" />
        <text x="50" y="1861" fontSize="30" fill="#fff" textAnchor="middle">B</text>
        <polyline points={raw(intraday)} fill="none" stroke="#4f94e8" strokeWidth="4" strokeLinejoin="round" />
        {([[16, 1797], [16, 1823], [120, 1786], [129, 1776], [120, 1839]] as Pt[]).map(([x, y]) => (
          <circle key={`${x}-${y}`} cx={x} cy={y} r="6" fill="#4f94e8" fillOpacity="0.85" />
        ))}
        <circle cx="43" cy="1885" r="5" fill="#dd4a5a" />
        <g fontSize="27" fill="#444">
          <text x="12" y="2122">09:30</text>
          <text x="540" y="2122" textAnchor="middle">11:30</text>
          <text x="1068" y="2122" textAnchor="end">15:00</text>
        </g>
      </svg>
      <svg className="block w-full" viewBox="0 2130 1080 165" role="img" aria-label="分时成交量">
        <path d="M13 2139h1055v149H13zM13 2213h1055M276 2139v149M540 2139v149M804 2139v149" fill="none" stroke="#ebebeb" strokeWidth="2" />
        <text x="12" y="2173" fontSize="27" fill="#666">量:3230</text>
        <text x="1068" y="2164" fontSize="27" fill="#444" textAnchor="end">41.84万</text>
        {minuteBars.map(([c, h], i) => (
          <rect key={i} x={15 + i * 4.34} y={2289 - h} width="3" height={h} fill={barColor[c]} />
        ))}
        <path d="M167 2288h880" stroke="#666" strokeWidth="2" strokeDasharray="3 1" />
        <rect x="541" y="2286" width="2" height="3" fill="#666" />
        <text x="124" y="2173" fontSize="27" fill="#2b2b2b">额:107.5万</text>
      </svg>
      <nav className="flex h-[93px] justify-between border-b border-[#222] px-[192px] pb-[6px] text-[41px] text-[#2b2b2b]">
        <button className="flex items-center gap-[20px]">
          <svg className="h-[36px] w-[20px]" viewBox="0 0 20 36" fill="none" stroke="#ccc" strokeWidth="3"><path d="M18 2L2 18l16 16" /></svg>
          前一天
        </button>
        <button className="flex items-center gap-[20px]">
          后一天
          <svg className="h-[36px] w-[20px]" viewBox="0 0 20 36" fill="none" stroke="#ccc" strokeWidth="3"><path d="M2 2l16 16L2 34" /></svg>
        </button>
      </nav>
    </section>
  );
}

export default function App() {
  return (
    <main className="relative w-full overflow-hidden bg-white font-['Noto_Sans_CJK_SC','Noto_Sans',sans-serif]">
      <header className="bg-[#f92c32]">
        <StatusBar />
        <TitleBar />
      </header>
      <Stats />
      <DateBar />
      <NewsRow />
      <PeriodTabs />
      <AverageRow />
      <PriceChart />
      <VolumeChart />
      <DayDetail />
      <button aria-label="聊天" className="absolute top-[563px] -right-[84px] flex h-[128px] w-[128px] items-center justify-center rounded-full bg-white shadow-[0_4px_16px_6px_rgba(90,60,90,0.06)]">
        <svg className="h-[110px] w-[110px]" viewBox="0 0 110 110">
          <circle cx="55" cy="55" r="55" fill="#95e8bb" />
          <ellipse cx="42" cy="47" rx="28" ry="25" fill="#fff" />
          <path d="M24 62l-2 16 14-8z" fill="#fff" />
          <circle cx="33" cy="39" r="4" fill="#95e8bb" />
        </svg>
      </button>
    </main>
  );
}
